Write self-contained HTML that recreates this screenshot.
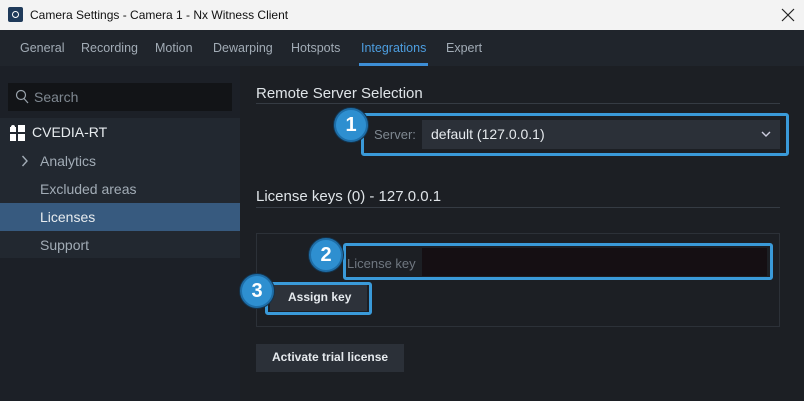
<!DOCTYPE html><html><head><style>
*{margin:0;padding:0;box-sizing:border-box}
body{width:804px;height:401px;overflow:hidden;background:#1c1f24;font-family:"Liberation Sans",sans-serif;position:relative}
.a{position:absolute}
.t{white-space:nowrap}
.circ{position:absolute;width:34px;height:34px;border-radius:50%;background:#2e8fd0;border:2px solid #1e6ea8;color:#fff;font-weight:bold;font-size:20px;text-align:center;line-height:30px;box-shadow:0 0 0 1px #14324a}
.hl{position:absolute;border:3px solid #3a9ad9;border-radius:3px}
</style></head><body>
<div class="a" style="left:0;top:0;width:804px;height:30px;background:#f3f3f3"></div>
<div class="a" style="left:8px;top:7px;width:15px;height:15px;background:#1f3a5a;border-radius:2px"></div>
<div class="a" style="left:12px;top:11px;width:7px;height:7px;border:1.5px solid #fff;border-radius:50%"></div>
<div class="a t" style="left:30px;top:8px;font-size:12px;color:#111">Camera Settings - Camera 1 - Nx Witness Client</div>
<svg class="a" style="left:781px;top:8px" width="14" height="14"><path d="M1 1L13 13M13 1L1 13" stroke="#222" stroke-width="1.2"/></svg>
<div class="a" style="left:0;top:30px;width:804px;height:36px;background:#20252c"></div>
<div class="a t" style="top:41px;font-size:12.5px;color:#a2acb6;left:20px">General</div>
<div class="a t" style="top:41px;font-size:12.5px;color:#a2acb6;left:81px">Recording</div>
<div class="a t" style="top:41px;font-size:12.5px;color:#a2acb6;left:155px">Motion</div>
<div class="a t" style="top:41px;font-size:12.5px;color:#a2acb6;left:213px">Dewarping</div>
<div class="a t" style="top:41px;font-size:12.5px;color:#a2acb6;left:291px">Hotspots</div>
<div class="a t" style="top:41px;font-size:12.5px;color:#4d9ee0;left:361px">Integrations</div>
<div class="a t" style="top:41px;font-size:12.5px;color:#a2acb6;left:446px">Expert</div>
<div class="a" style="left:359px;top:63px;width:69px;height:3px;background:#3d8ed6"></div>
<div class="a" style="left:0;top:66px;width:240px;height:335px;background:#1c2027"></div>
<div class="a" style="left:0;top:118px;width:240px;height:140px;background:#222830"></div>
<div class="a" style="left:8px;top:83px;width:224px;height:28px;background:#121417"></div>
<svg class="a" style="left:15px;top:89px" width="14" height="16"><circle cx="6" cy="6" r="4.5" fill="none" stroke="#9aa3ac" stroke-width="1.2"/><line x1="9" y1="9.5" x2="13" y2="14" stroke="#9aa3ac" stroke-width="1.2"/></svg>
<div class="a t" style="left:34px;top:89px;font-size:14px;color:#7f8891">Search</div>
<svg class="a" style="left:10px;top:125px" width="16" height="16"><rect x="0" y="2" width="6" height="5" fill="#fff"/><circle cx="3" cy="2" r="2" fill="#fff"/><rect x="8" y="0" width="7" height="7" fill="#fff"/><rect x="0" y="9" width="6" height="7" fill="#fff"/><rect x="8" y="9" width="7" height="7" fill="#fff"/></svg>
<div class="a t" style="left:32px;top:124px;font-size:14px;color:#e8ecef">CVEDIA-RT</div>
<svg class="a" style="left:21px;top:155px" width="8" height="12"><path d="M1.5 1L6 6L1.5 11" fill="none" stroke="#a2acb6" stroke-width="1.4"/></svg>
<div class="a t" style="left:40px;top:153px;font-size:14px;color:#a2acb6">Analytics</div>
<div class="a t" style="left:40px;top:181px;font-size:14px;color:#a2acb6">Excluded areas</div>
<div class="a" style="left:0;top:203px;width:240px;height:28px;background:#375a7f"></div>
<div class="a t" style="left:40px;top:209px;font-size:14px;color:#e8ecef">Licenses</div>
<div class="a t" style="left:40px;top:237px;font-size:14px;color:#a2acb6">Support</div>
<div class="a t" style="left:256px;top:85px;font-size:15px;color:#dfe4e8">Remote Server Selection</div>
<div class="a" style="left:256px;top:103px;width:524px;height:1px;background:#353b43"></div>
<div class="hl" style="left:361px;top:113px;width:428px;height:43px"></div>
<div class="a t" style="left:374px;top:127px;font-size:13px;color:#7f8891">Server:</div>
<div class="a" style="left:422px;top:120px;width:358px;height:29px;background:#2b3038"></div>
<div class="a t" style="left:431px;top:126px;font-size:14px;color:#e6eaee">default (127.0.0.1)</div>
<svg class="a" style="left:761px;top:131px" width="10" height="7"><path d="M1 1L5 5L9 1" fill="none" stroke="#ccd" stroke-width="1.4"/></svg>
<div class="circ" style="left:334px;top:108px">1</div>
<div class="a t" style="left:256px;top:188px;font-size:15px;color:#dfe4e8">License keys (0) - 127.0.0.1</div>
<div class="a" style="left:256px;top:207px;width:524px;height:1px;background:#353b43"></div>
<div class="a" style="left:256px;top:233px;width:524px;height:94px;border:1px solid #2c3138"></div>
<div class="hl" style="left:343px;top:243px;width:430px;height:37px"></div>
<div class="a t" style="left:347px;top:256px;font-size:13px;color:#6f7780">License key</div>
<div class="a" style="left:422px;top:248px;width:345px;height:28px;background:#150f13"></div>
<div class="circ" style="left:309px;top:238px">2</div>
<div class="hl" style="left:265px;top:282px;width:107px;height:33px"></div>
<div class="a" style="left:270px;top:285px;width:97px;height:26px;background:#2d323a"></div>
<div class="a t" style="left:288px;top:290px;font-size:12px;color:#e6eaee;font-weight:bold">Assign key</div>
<div class="circ" style="left:240px;top:274px">3</div>
<div class="a" style="left:256px;top:344px;width:148px;height:28px;background:#2b3038"></div>
<div class="a t" style="left:272px;top:350px;font-size:12px;color:#e6eaee;font-weight:bold">Activate trial license</div>
</body></html>
